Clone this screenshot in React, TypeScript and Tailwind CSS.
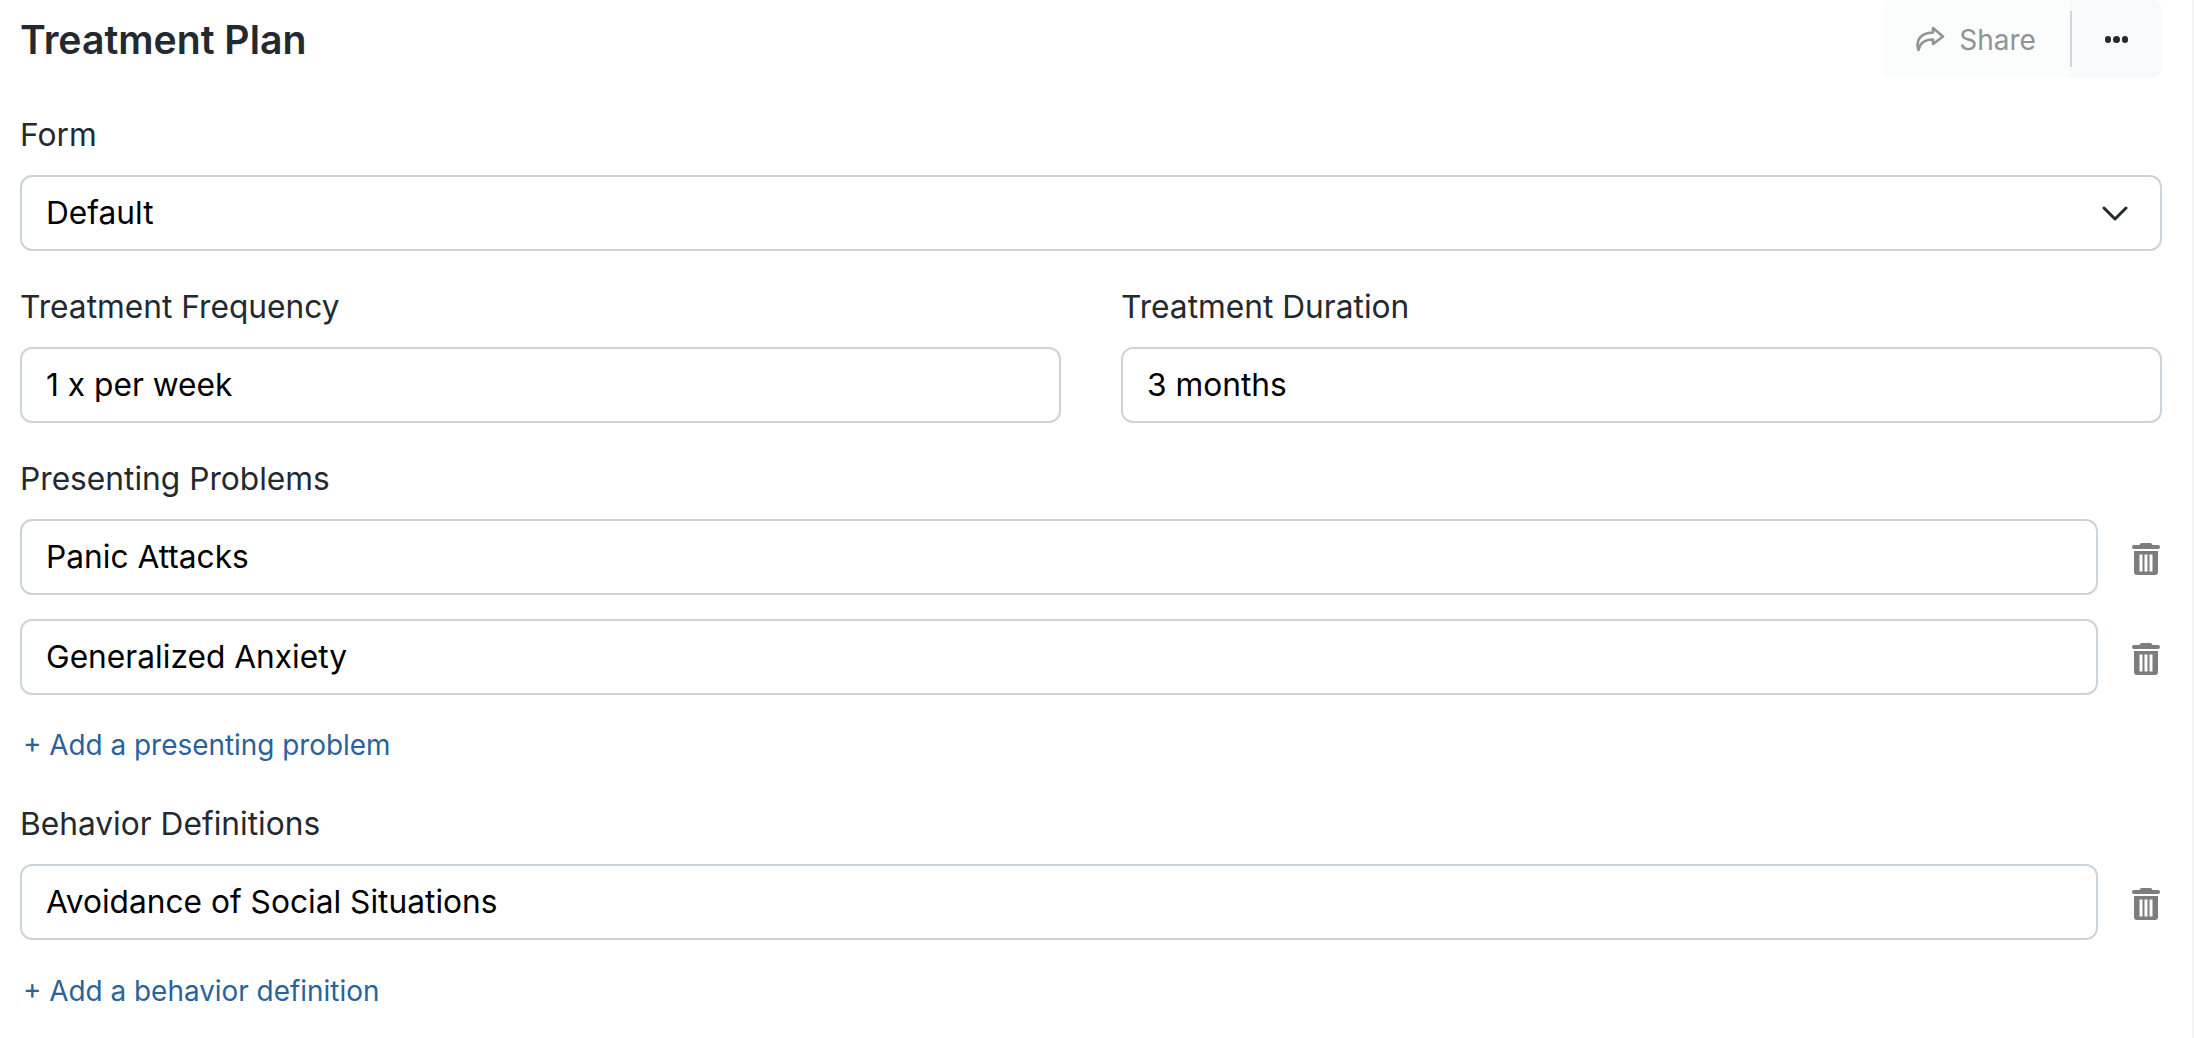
const inputCls = "flex h-[76px] w-full items-center rounded-[12px] border-2 border-[#ccd3da] bg-white px-[24px] text-[31.7px] text-black";
const labelCls = "text-[31.7px] leading-[42px] text-[#24292f]";
const linkCls = "pl-[3px] text-[27.9px] leading-[38px] text-[#2a6399]";

function Trash() {
  return (
    <svg width="28" height="32" viewBox="0 0 28 32" className="shrink-0">
      <path fill="#7d7d7d" d="M10 0h8a2.500 2.500 0 0 1 2.500 2H26a2 2 0 0 1 0 4H2a2 2 0 0 1 0-4h5.500A2.500 2.500 0 0 1 10 0Z" />
      <path fill="#7d7d7d" fillRule="evenodd" d="M2 8h24v21a3 3 0 0 1-3 3H5a3 3 0 0 1-3-3V8Zm5.500 3.500v17h3v-17h-3Zm5 0v17h3v-17h-3Zm5 0v17h3v-17h-3Z" />
    </svg>
  );
}

function Row({ value }: { value: string }) {
  return (
    <div className="flex items-center">
      <div className={inputCls}>{value}</div>
      <div className="flex w-[64px] shrink-0 justify-end pr-[2px] pt-[4px]">
        <Trash />
      </div>
    </div>
  );
}

export default function App() {
  return (
    <div className="h-[1038px] w-full overflow-hidden border-r-2 border-[#f3f3f3] bg-white pl-[20px] pr-[30px] font-['Inter','Liberation_Sans',sans-serif]">
      <div className="flex h-[78px] items-center justify-between">
        <h1 className="pt-[1px] text-[39.200px] font-semibold leading-[48px] text-[#24292f]">Treatment Plan</h1>
        <div className="flex h-[78px] w-[281px] overflow-hidden rounded-[10px]">
          <div className="flex w-[189px] items-center justify-center gap-[14px] bg-[#fbfcfc] text-[28px] text-[#8f9396]">
            <svg width="30" height="26" viewBox="0 0 30 26" fill="none" stroke="#8f9396" strokeWidth="2.600" strokeLinejoin="round" strokeLinecap="round">
              <path d="M18 2l10 8.500L18 18v-4.500C10 13.500 5 16 3.500 24 0 14 6 7 18 6.500V2Z" />
            </svg>
            <span className="pt-[2px]">Share</span>
          </div>
          <div className="flex flex-1 items-center justify-center bg-[#f8f9fb] py-[11px]">
            <div className="h-full w-[2px] shrink-0 bg-[#ced4de]" />
            <div className="flex flex-1 items-center justify-center gap-[2px] pr-[1px] pt-[1px]">
              <span className="h-[6.500px] w-[6.500px] rounded-full bg-[#24292f]" />
              <span className="h-[6.500px] w-[6.500px] rounded-full bg-[#24292f]" />
              <span className="h-[6.500px] w-[6.500px] rounded-full bg-[#24292f]" />
            </div>
          </div>
        </div>
      </div>
      <div className="mt-[36px] flex flex-col">
        <label className={labelCls}>Form</label>
        <div className={`${inputCls} mt-[19px] justify-between pr-[32px]`}>
          <span>Default</span>
          <svg width="26" height="15" viewBox="0 0 26 15" fill="none" stroke="#24292f" strokeWidth="3" strokeLinecap="round" strokeLinejoin="round">
            <path d="M2 2l11 11L24 2" />
          </svg>
        </div>
        <div className="mt-[35px] grid grid-cols-2 gap-x-[60px]">
          <div>
            <label className={labelCls}>Treatment Frequency</label>
            <div className={`${inputCls} mt-[19px]`}>1 x per week</div>
          </div>
          <div>
            <label className={labelCls}>Treatment Duration</label>
            <div className={`${inputCls} mt-[19px]`}>3 months</div>
          </div>
        </div>
        <label className={`${labelCls} mt-[35px]`}>Presenting Problems</label>
        <div className="mt-[19px] flex flex-col gap-[24px]">
          <Row value="Panic Attacks" />
          <Row value="Generalized Anxiety" />
        </div>
        <div className={`${linkCls} mt-[31px]`}>+ Add a presenting problem</div>
        <label className={`${labelCls} mt-[39px]`}>Behavior Definitions</label>
        <div className="mt-[19px]">
          <Row value="Avoidance of Social Situations" />
        </div>
        <div className={`${linkCls} mt-[32px]`}>+ Add a behavior definition</div>
      </div>
    </div>
  );
}
